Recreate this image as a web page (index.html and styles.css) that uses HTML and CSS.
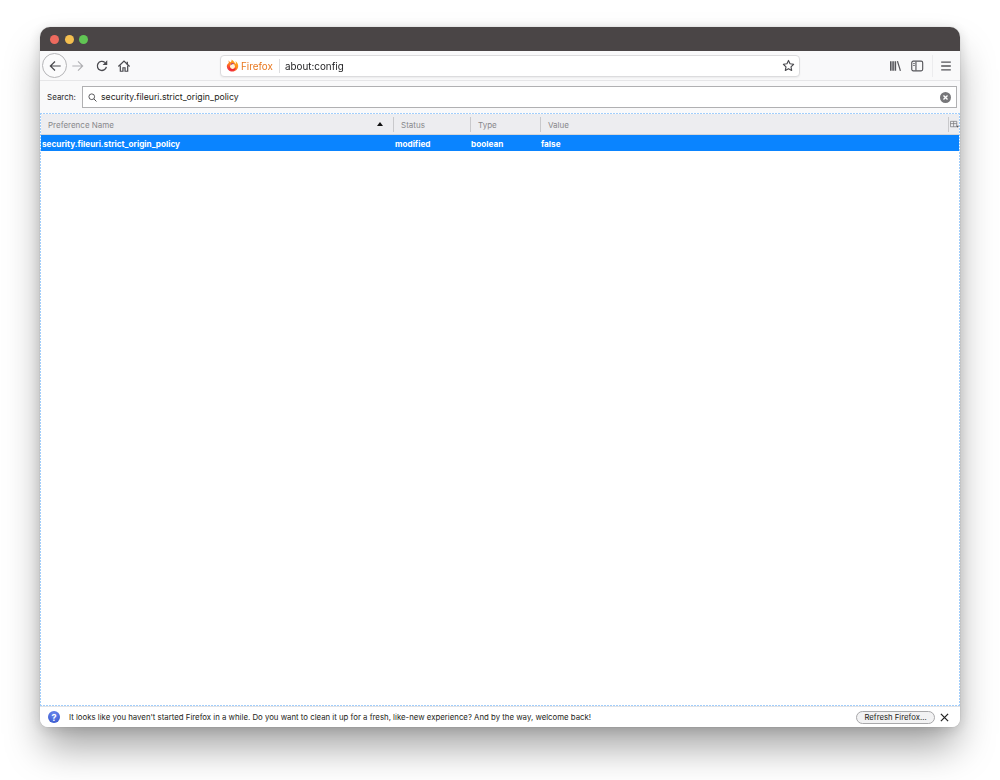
FILE: index.html
```html
<!DOCTYPE html>
<html lang="en">
<head>
<meta charset="utf-8">
<title>about:config</title>
<link rel="stylesheet" href="styles.css">
</head>
<body>
<div class="window">
  <div class="titlebar">
    <span class="light red"></span><span class="light yellow"></span><span class="light green"></span>
  </div>
  <div class="toolbar">
    <div class="back">
      <svg class="ic" viewBox="0 0 16 16"><path d="M14.500 8H2.500M8 2.800 2.700 8 8 13.200" fill="none" stroke="#4a4a4f" stroke-width="1.400"/></svg>
    </div>
    <svg class="ic fwd" viewBox="0 0 16 16"><path d="M1.500 8h12M8 2.800 13.300 8 8 13.200" fill="none" stroke="#b0b0b3" stroke-width="1.300"/></svg>
    <svg class="ic reload" viewBox="0 0 16 16"><path d="M13 9A5.200 5.200 0 1 1 11.300 4" fill="none" stroke="#4a4a4f" stroke-width="1.500"/><path d="M14 1.500V6.800H8.700z" fill="#4a4a4f"/></svg>
    <svg class="ic home" viewBox="0 0 16 16"><path d="M1.600 8.500 8 2.400l6.400 6.100" fill="none" stroke="#4a4a4f" stroke-width="1.500"/><path d="M11 3h1.500v3.200H11z" fill="#4a4a4f"/><path d="M3.800 7.500V14H6.800V10H9.200V14H12.200V7.500" fill="none" stroke="#4a4a4f" stroke-width="1.400"/></svg>
    <div class="urlbar">
      <svg class="logo" viewBox="0 0 16 16">
        <defs>
          <linearGradient id="ffg" x1="0.800" y1="0.100" x2="0.200" y2="0.950">
            <stop offset="0" stop-color="#ffb21c"/>
            <stop offset="0.550" stop-color="#ff7a1a"/>
            <stop offset="1" stop-color="#f0294a"/>
          </linearGradient>
        </defs>
        <path d="M3.500 1.500C3 3 3.200 4 3.600 4.700 2.300 5.800 1 7 1 9c0 3.700 3.200 6.500 7 6.500s7-3 7-6.800c0-2.500-1.300-4.800-3.400-6.200.8 1.500.7 3-.1 3.800C10.800 3.800 9 2 7 .5 7 2.500 6 3.500 5.200 4.100 4.500 3.600 3.800 2.700 3.500 1.500z" fill="url(#ffg)"/>
        <circle cx="8" cy="9.200" r="3" fill="#fff3dc"/>
        <path d="M4 8.500c.5 3 3 4.400 5.200 3.900 1.500-.4 2.300-1.500 2.600-2.700.6 2.500-1.400 4.600-3.900 4.600-2.600 0-4.500-2.500-3.900-5.800z" fill="#e8213f"/>
        <path d="M5.500 6.500C6.500 5.300 8.500 5 10.300 5.800 9 5.800 7.800 6.200 7.200 7.200z" fill="#a62a8c"/>
      </svg>
      <span class="brand">Firefox</span>
      <span class="urlsep"></span>
      <span class="urltext">about:config</span>
      <svg class="star" viewBox="0 0 16 16"><path d="M8 1.800 9.900 5.900l4.400.6-3.200 3.100.8 4.500L8 11.900l-3.900 2.200.8-4.500L1.700 6.500l4.400-.6z" fill="none" stroke="#4a4a4f" stroke-width="1.400" stroke-linejoin="round"/></svg>
    </div>
    <svg class="ic lib" viewBox="0 0 16 16"><path d="M3.200 2.500v11M5.800 2.500v11M8.400 2.500v11" stroke="#55555a" stroke-width="1.800" fill="none"/><path d="M10.800 2.500l3.400 11" stroke="#55555a" stroke-width="1.400" fill="none"/></svg>
    <svg class="ic side" viewBox="0 0 16 16"><rect x="2" y="2.500" width="12.500" height="11" rx="1.700" fill="none" stroke="#55555a" stroke-width="1.300"/><path d="M6.800 3v10" stroke="#55555a" stroke-width="1.300"/><path d="M3.600 5.200h1.900M3.600 7.400h1.900" stroke="#55555a"/></svg>
    <span class="toolsep"></span>
    <svg class="ic menu" viewBox="0 0 16 16"><path d="M2.500 3.500h11M2.500 8h11M2.500 12.500h11" stroke="#55555a" stroke-width="1.500"/></svg>
  </div>
  <div class="searchrow">
    <label class="searchlabel">Search:</label>
    <div class="searchbox">
      <svg class="mag" viewBox="0 0 12 12"><circle cx="5" cy="5" r="3.800" fill="none" stroke="#4a4a4d" stroke-width="1.200"/><path d="M7.800 7.800 11.300 11.300" stroke="#4a4a4d" stroke-width="1.300"/></svg>
      <span class="searchtext">security.fileuri.strict_origin_policy</span>
      <span class="clear"><svg viewBox="0 0 12 12"><path d="M3.800 3.800l4.400 4.400M8.200 3.800 3.800 8.200" stroke="#fff" stroke-width="1.500"/></svg></span>
    </div>
  </div>
  <div class="tree">
    <div class="thead">
      <div class="th col-name">Preference Name<span class="sort"></span></div>
      <div class="th col-status">Status</div>
      <div class="th col-type">Type</div>
      <div class="th col-value">Value</div>
      <div class="th col-pick"><svg viewBox="0 0 10 10"><path d="M.5 1.500h7v6h-7zM.5 4h7M4 1.500v6" fill="none" stroke="#77777a" stroke-width=".8"/><path d="M7 6.500h3L8.500 8.500z" fill="#55555a"/></svg></div>
    </div>
    <div class="row">
      <div class="td col-name">security.fileuri.strict_origin_policy</div>
      <div class="td col-status">modified</div>
      <div class="td col-type">boolean</div>
      <div class="td col-value">false</div>
    </div>
  </div>
  <div class="infobar">
    <span class="help">?</span>
    <span class="infotext">It looks like you haven't started Firefox in a while. Do you want to clean it up for a fresh, like-new experience? And by the way, welcome back!</span>
    <button class="refresh">Refresh Firefox…</button>
    <svg class="close" viewBox="0 0 10 10"><path d="M1 1l8 8M9 1 1 9" stroke="#222" stroke-width="1.400"/></svg>
  </div>
</div>
</body>
</html>
```
FILE: styles.css
```css
* { box-sizing: border-box; }
html, body { margin: 0; height: 100%; background: #fff; overflow: hidden; }
body { padding: 27px 40px 53px; font-family: Inter, "Liberation Sans", Arial, sans-serif; }
.window {
  height: 700px; display: flex; flex-direction: column;
  background: #fff; border-radius: 10px 10px 8px 8px; overflow: hidden;
  box-shadow: 0 24px 38px -4px rgba(0,0,0,.36), 0 2px 14px rgba(0,0,0,.14), 0 0 1px rgba(0,0,0,.35);
  filter: blur(.3px);
}
.titlebar { height: 24px; flex: none; background: #4a4546; display: flex; align-items: center; gap: 5.500px; padding-left: 10px; }
.light { width: 9px; height: 9px; border-radius: 50%; }
.red { background: #ed6a5e; }
.yellow { background: #f4bf4f; }
.green { background: #61c554; }
.toolbar { height: 30px; flex: none; background: #f9f9fa; border-bottom: 1px solid #e6e6e8; display: flex; align-items: center; }
.ic { width: 14px; height: 14px; flex: none; }
.back { width: 25px; height: 25px; margin-left: 2px; border-radius: 50%; border: 1px solid #b5b5b8; background: #fbfbfc; display: flex; align-items: center; justify-content: center; flex: none; }
.fwd { margin-left: 4px; }
.reload { margin-left: 10px; }
.home { margin-left: 8px; }
.urlbar { width: 580px; height: 22px; margin-left: 89px; background: #fff; border: 1px solid #dcdcde; border-radius: 4px; display: flex; align-items: center; padding-left: 5px; box-shadow: 0 1px 2px rgba(0,0,0,.06); flex: none; }
.logo { width: 13px; height: 13px; flex: none; }
.brand { font-size: 9.850px; color: #e8771f; margin-left: 2px; width: 32px; }
.urlsep { width: 1px; height: 14px; background: #dedee0; margin-left: 6px; }
.urltext { font-size: 9.850px; color: #1d1d1f; margin-left: 5px; flex: 1; }
.star { width: 13px; height: 13px; margin-right: 4px; flex: none; }
.lib { margin-left: 88px; }
.side { margin-left: 8px; }
.toolsep { width: 1px; height: 22px; background: #ececee; margin-left: 8px; }
.menu { margin-left: 6px; }
.searchrow { height: 32px; flex: none; background: #f9f9fa; display: flex; align-items: center; padding: 0 3px 0 7px; }
.searchlabel { font-size: 8px; color: #2a2a2c; width: 28px; }
.searchbox { flex: 1; height: 22px; margin-left: 7px; background: #fff; border: 1px solid #b0b0b2; display: flex; align-items: center; padding-left: 5px; }
.mag { width: 9px; height: 9px; flex: none; }
.searchtext { font-size: 8.700px; color: #1e1e20; margin-left: 4px; flex: 1; }
.clear { width: 11px; height: 11px; border-radius: 50%; background: #77777a; margin-right: 5px; display: flex; }
.tree {
  flex: 1; display: flex; flex-direction: column; border: 1px solid transparent; background-color: #fff; background-origin: border-box; background-repeat: no-repeat;
  background-image:
    repeating-linear-gradient(90deg, #a2cefb 0 2px, transparent 2px 3px),
    repeating-linear-gradient(90deg, #a2cefb 0 2px, transparent 2px 3px),
    repeating-linear-gradient(0deg, #a2cefb 0 2px, transparent 2px 3px),
    repeating-linear-gradient(0deg, #a2cefb 0 2px, transparent 2px 3px);
  background-size: 100% 1px, 100% 1px, 1px 100%, 1px 100%;
  background-position: left top, left bottom, left top, right top;
}
.thead { height: 21px; flex: none; display: flex; align-items: center; background: #ededf0; border-bottom: 1px solid #d6d6d8; }
.th { font-size: 8px; color: #88888b; height: 15px; display: flex; align-items: center; padding: 1px 0 0 7px; border-right: 1px solid #c9c9cc; }
.col-name { width: 353px; }
.col-status { width: 77px; }
.col-type { width: 70px; }
.col-value { width: 408px; }
.col-pick { flex: 1; padding: 0 0 0 1px; border: 0; }
.col-pick svg { width: 9px; height: 9px; }
.th.col-name { position: relative; }
.sort { position: absolute; right: 10px; top: 5px; border: 3.500px solid transparent; border-top: 0; border-bottom: 4px solid #111; }
.row { height: 16px; flex: none; background: #0a84ff; color: #fff; display: flex; align-items: center; font-weight: 700; padding-top: 1px; }
.td { font-size: 8.200px; padding-left: 1px; }
.td.col-type, .td.col-value { padding-left: 0; }
.infobar { height: 21px; flex: none; background: #fff; border-top: 1px solid #e3e3e5; display: flex; align-items: center; padding-left: 8px; }
.help { width: 12px; height: 12px; border-radius: 50%; background: radial-gradient(circle at 50% 30%, #6f8df0, #2f4fc8); color: #fff; font-size: 9px; font-weight: 700; display: flex; align-items: center; justify-content: center; flex: none; }
.infotext { font-size: 7.820px; color: #1e1e20; margin-left: 9px; flex: 1; white-space: nowrap; }
.refresh { width: 79px; height: 13px; padding: 0; font: 7.750px Inter, "Liberation Sans", Arial, sans-serif; color: #1e1e20; background: #f2f2f3; border: 1px solid #a8a8aa; border-radius: 7px; flex: none; }
.close { width: 9px; height: 9px; margin: 0 11px 0 5px; flex: none; }
```
